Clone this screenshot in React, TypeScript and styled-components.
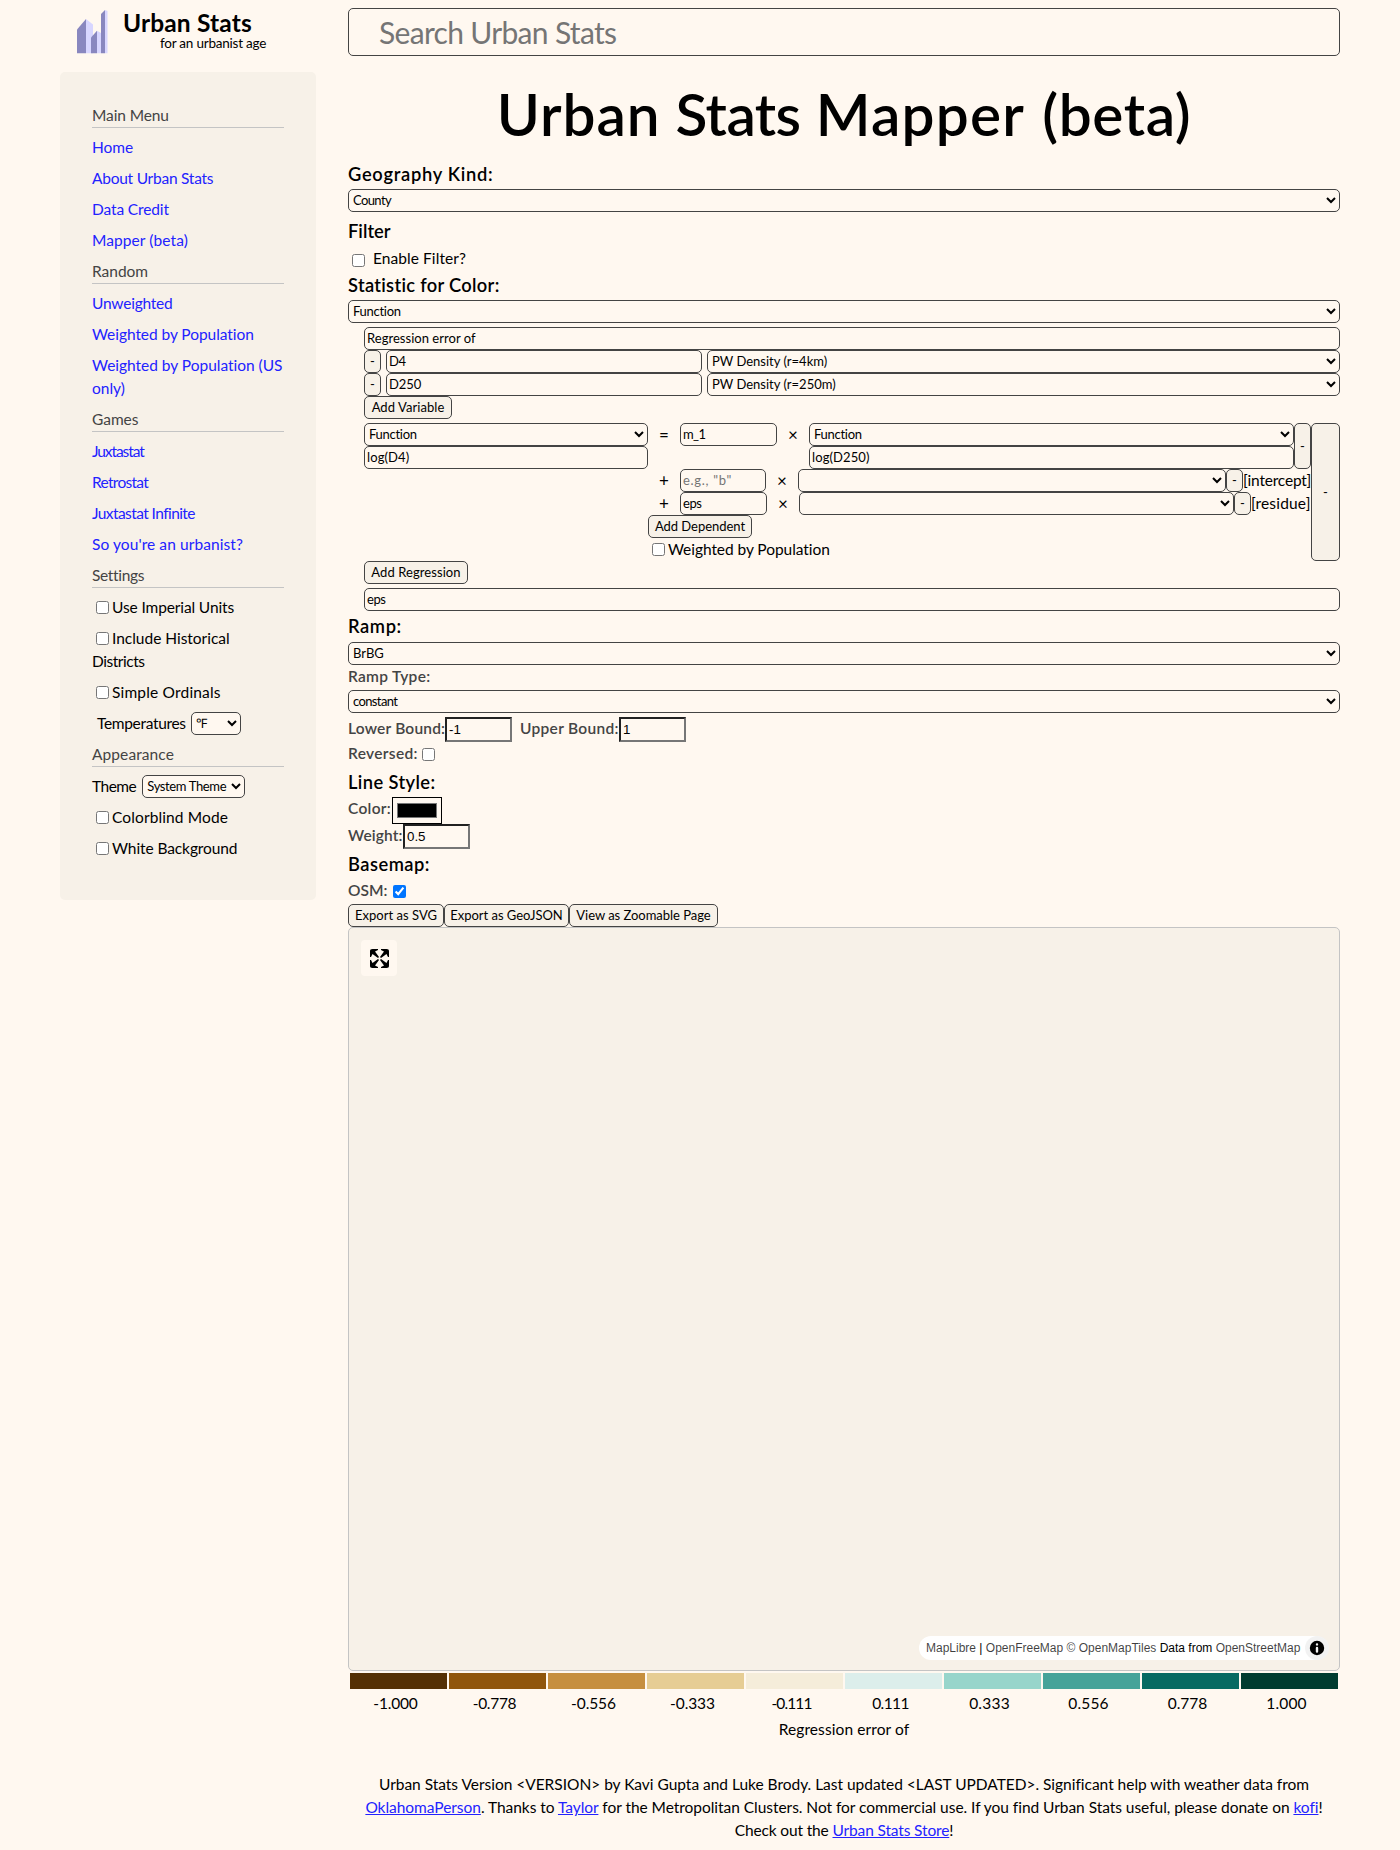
import React from "react";
import styled, { createGlobalStyle, css } from "styled-components";

const colors = {
  background: "#fff8f0",
  panel: "#f7f1e8",
  ink: "#000000",
  muted: "#444444",
  rule: "#c4c4c4",
  border: "#444444",
  link: "#2222ff",
};

const GlobalStyle = createGlobalStyle`
  *, *::before, *::after { box-sizing: border-box; }
  body {
    margin: 0;
    background: ${colors.background};
    color: ${colors.ink};
    font-family: Lato, "Open Sans", sans-serif;
    font-size: 15.5px;
    line-height: 23px;
    overflow-x: hidden;
  }
`;

/* ---------- shared pieces ---------- */

type Track = { $track?: number };

const Text = styled.span<Track & { $gap?: number }>`
  white-space: nowrap;
  letter-spacing: ${p => p.$track ?? 0}px;
  margin-left: ${p => p.$gap ?? 0}px;
`;

const control = css`
  display: block;
  height: 23px;
  margin: 0;
  border: 1px solid ${colors.border};
  border-radius: 5px;
  background: ${colors.background};
  color: ${colors.ink};
  font-family: inherit;
  font-size: 13px;
  min-width: 0;
`;

type Size = { $width?: string; $grow?: boolean };

const Select = styled.select<Track & Size>`
  ${control}
  width: ${p => p.$width ?? "100%"};
  flex: ${p => (p.$grow ? "1 1 0" : "none")};
  padding-bottom: 1px;
  letter-spacing: ${p => p.$track ?? 0}px;
`;

const Field = styled.input<Track & Size>`
  ${control}
  width: ${p => p.$width ?? "100%"};
  flex: none;
  padding: 1px 2px 2px;
  letter-spacing: ${p => p.$track ?? 0}px;
`;

const Button = styled.button<Track & Size & { $tall?: boolean }>`
  ${control}
  width: ${p => p.$width ?? "auto"};
  height: ${p => (p.$tall ? "auto" : "23px")};
  flex: none;
  padding: 1px 0 2px;
  background: ${colors.panel};
  text-align: center;
  white-space: nowrap;
  letter-spacing: ${p => p.$track ?? 0}px;
`;

const Check = styled.input.attrs({ type: "checkbox" })<{ $top?: number; $left?: number }>`
  flex: none;
  width: 13px;
  height: 13px;
  margin: ${p => p.$top ?? 5}px 3px 0 ${p => p.$left ?? 4}px;
`;

const Row = styled.div<{ $height?: number; $top?: number; $gap?: number }>`
  display: flex;
  align-items: flex-start;
  height: ${p => p.$height ?? 23}px;
  margin-top: ${p => p.$top ?? 0}px;
  gap: ${p => p.$gap ?? 0}px;
`;

function Pick({ value, ...rest }: { value: string } & Track & Size) {
  return (
    <Select {...rest}>
      <option>{value}</option>
    </Select>
  );
}

/* ---------- page frame ---------- */

const Page = styled.div`
  display: grid;
  grid-template-columns: 256px 992px;
  column-gap: 32px;
  width: 1280px;
  height: 1850px;
  margin: 0 auto;
  overflow: hidden;
`;

const Side = styled.aside`
  display: flex;
  flex-direction: column;
`;

const Main = styled.main`
  padding-top: 8px;
`;

/* ---------- logo ---------- */

const Brand = styled.div`
  display: flex;
  gap: 15px;
  height: 72px;
  padding: 9px 0 0 17px;
`;

const BrandWords = styled.div`
  display: flex;
  flex-direction: column;
`;

const BrandName = styled.div`
  height: 24px;
  font-size: 24.5px;
  font-weight: 700;
  line-height: 27px;
  letter-spacing: 0.15px;
`;

const BrandTag = styled.div`
  padding-left: 37px;
  font-size: 13.5px;
  line-height: 20px;
  letter-spacing: -0.22px;
`;

function Logo() {
  return (
    <svg width="31" height="45" viewBox="0 0 31 45" aria-hidden="true">
      <path d="M9 10 L16 15.5 V44.3 H9Z" fill="#d8d6ff" />
      <path d="M0 20.5 L9 10 V44.3 H0Z" fill="#8987bf" />
      <path d="M20 21.7 L24 24 V44.3 H20Z" fill="#d8d6ff" />
      <path d="M14 28.5 L20 21.7 V44.3 H14Z" fill="#8987bf" />
      <path d="M28 1 L30.5 2 V44.3 H28Z" fill="#d8d6ff" />
      <path d="M24 5 L28 1 V44.3 H24Z" fill="#8987bf" />
    </svg>
  );
}

/* ---------- side menu ---------- */

const Menu = styled.nav`
  display: flex;
  flex-direction: column;
  gap: 8px;
  height: 828px;
  padding: 32px;
  border-radius: 5px;
  background: ${colors.panel};
`;

const MenuTitle = styled.div<Track>`
  height: 24px;
  border-bottom: 1px solid ${colors.rule};
  color: ${colors.muted};
  letter-spacing: ${p => p.$track ?? 0}px;
`;

const MenuLink = styled.a<Track>`
  color: ${colors.link};
  text-decoration: none;
  letter-spacing: ${p => p.$track ?? 0}px;
`;

const Setting = styled.label<Track>`
  display: flex;
  flex-wrap: wrap;
  letter-spacing: ${p => p.$track ?? 0}px;
`;

const WrappedLine = styled.span`
  flex-basis: 100%;
  letter-spacing: -0.46px;
`;

const menu: { title: string; track: number; links: [string, number][] }[] = [
  {
    title: "Main Menu",
    track: -0.11,
    links: [["Home", -0.04], ["About Urban Stats", -0.24], ["Data Credit", -0.12], ["Mapper (beta)", 0.09]],
  },
  {
    title: "Random",
    track: -0.02,
    links: [["Unweighted", -0.22], ["Weighted by Population", -0.06], ["Weighted by Population (US only)", -0.02]],
  },
  {
    title: "Games",
    track: -0.05,
    links: [["Juxtastat", -1.07], ["Retrostat", -0.7], ["Juxtastat Infinite", -0.58], ["So you're an urbanist?", 0.08]],
  },
];

function SideMenu() {
  return (
    <Menu>
      {menu.map(section => (
        <React.Fragment key={section.title}>
          <MenuTitle $track={section.track}>{section.title}</MenuTitle>
          {section.links.map(([label, track]) => (
            <MenuLink key={label} href="#" $track={track}>{label}</MenuLink>
          ))}
        </React.Fragment>
      ))}
      <MenuTitle $track={-0.33}>Settings</MenuTitle>
      <Setting $track={-0.12}><Check />Use Imperial Units</Setting>
      <Setting $track={-0.02}><Check /><span>Include Historical</span><WrappedLine>Districts</WrappedLine></Setting>
      <Setting $track={0.18}><Check />Simple Ordinals</Setting>
      <Setting>
        <Text $gap={5} $track={-0.32}>Temperatures</Text>
        <Text $gap={5}><Pick value="℉" $width="50px" /></Text>
      </Setting>
      <MenuTitle $track={0.09}>Appearance</MenuTitle>
      <Setting>
        <Text $track={-0.5}>Theme</Text>
        <Text $gap={6}><Pick value="System Theme" $width="103px" $track={-0.37} /></Text>
      </Setting>
      <Setting $track={0.12}><Check />Colorblind Mode</Setting>
      <Setting $track={-0.1}><Check />White Background</Setting>
    </Menu>
  );
}

/* ---------- mapper form ---------- */

const Search = styled.input`
  display: block;
  width: 100%;
  height: 48px;
  padding: 0 30px;
  border: 1px solid ${colors.border};
  border-radius: 5px;
  background: ${colors.background};
  font-family: inherit;
  font-size: 30px;
  letter-spacing: -0.67px;
  &::placeholder { color: #757575; }
`;

const PageTitle = styled.h1`
  height: 104px;
  margin: 0;
  padding-top: 14px;
  font-size: 58.5px;
  font-weight: 600;
  line-height: 86px;
  letter-spacing: 0.63px;
  text-align: center;
`;

const Heading = styled.h3<Track & { $top?: number; $bottom?: number }>`
  height: 27px;
  margin: ${p => p.$top ?? 5}px 0 ${p => p.$bottom ?? 2}px;
  font-size: 18.3px;
  font-weight: 600;
  line-height: 29px;
  letter-spacing: ${p => p.$track ?? 0}px;
`;

const Label = styled(Text)`
  color: ${colors.muted};
  font-weight: 600;
`;

const Indent = styled.div`
  padding-left: 16px;
`;

const Regression = styled.div`
  display: flex;
  height: 138px;
  margin-top: 4px;
`;

const Dependent = styled.div`
  width: 284px;
`;

const Terms = styled.div`
  width: 663px;
`;

const TermSelects = styled.div`
  flex: 1;
`;

const Term = styled.div<{ $height?: number }>`
  display: flex;
  height: ${p => p.$height ?? 23}px;
`;

const Operator = styled.span`
  flex: none;
  width: 32px;
  text-align: center;
  font-size: 17px;
`;

const NumberField = styled.input`
  width: 67px;
  height: 25px;
  margin: 0;
  padding: 1px 2px;
  border: 2px inset #767676;
  background: ${colors.background};
  font-family: "Liberation Sans", Arial, sans-serif;
  font-size: 13.333px;
`;

const ColorField = styled.input`
  width: 50px;
  height: 27px;
  margin: 0;
  border: 1px solid #000;
  background: ${colors.background};
`;

const LabelBox = styled.div<{ $width: number }>`
  flex: none;
  width: ${p => p.$width}px;
`;

function StatisticForm() {
  return (
    <Indent>
      <Row $top={4}><Field defaultValue="Regression error of" $track={0.03} /></Row>
      <Row $gap={5}>
        <Button $width="17px">-</Button>
        <Field defaultValue="D4" $width="316px" $track={-0.5} />
        <Pick value="PW Density (r=4km)" $grow />
      </Row>
      <Row $gap={5}>
        <Button $width="17px">-</Button>
        <Field defaultValue="D250" $width="316px" $track={-0.09} />
        <Pick value="PW Density (r=250m)" $grow />
      </Row>
      <Row><Button $width="88px" $track={0.07}>Add Variable</Button></Row>
      <Regression>
        <Dependent>
          <Pick value="Function" $track={-0.28} />
          <Field defaultValue="log(D4)" $track={0.11} />
        </Dependent>
        <Terms>
          <Term $height={46}>
            <Operator>=</Operator>
            <Field defaultValue="m_1" $width="97px" $track={-0.6} />
            <Operator>×</Operator>
            <TermSelects>
              <Pick value="Function" $track={-0.28} />
              <Field defaultValue="log(D250)" $track={0.11} />
            </TermSelects>
            <Button $width="17px" $tall>-</Button>
          </Term>
          <Term>
            <Operator>+</Operator>
            <Field placeholder={'e.g., "b"'} $width="86px" $track={0.7} />
            <Operator>×</Operator>
            <Pick value="" $grow />
            <Button $width="17px">-</Button>
            <LabelBox $width={68}><Text $track={-0.2}>[intercept]</Text></LabelBox>
          </Term>
          <Term>
            <Operator>+</Operator>
            <Field defaultValue="eps" $width="87px" $track={-0.43} />
            <Operator>×</Operator>
            <Pick value="" $grow />
            <Button $width="17px">-</Button>
            <LabelBox $width={60}><Text $track={0.18}>[residue]</Text></LabelBox>
          </Term>
          <Term><Button $width="104px" $track={-0.04}>Add Dependent</Button></Term>
          <Term><Check /><Text $track={-0.06}>Weighted by Population</Text></Term>
        </Terms>
        <Button $width="29px" $tall>-</Button>
      </Regression>
      <Row><Button $width="104px" $track={0.08}>Add Regression</Button></Row>
      <Row $top={4}><Field defaultValue="eps" $track={-0.43} /></Row>
    </Indent>
  );
}

function MapperForm() {
  return (
    <>
      <Heading $top={0} $track={0.71}>Geography Kind:</Heading>
      <Pick value="County" $track={-0.6} />
      <Heading $track={0.05}>Filter</Heading>
      <Row $height={20}>
        <Check $top={8} />
        <Text as="div" $gap={5} $track={0.07}><Row $top={1}>Enable Filter?</Row></Text>
      </Row>
      <Heading $track={0.32}>Statistic for Color:</Heading>
      <Pick value="Function" $track={-0.28} />
      <StatisticForm />
      <Heading $top={1} $bottom={3} $track={0.6}>Ramp:</Heading>
      <Pick value="BrBG" />
      <Row $height={25}><Label $track={0.3}>Ramp Type:</Label></Row>
      <Pick value="constant" $track={-0.62} />
      <Row $top={4} $height={25}>
        <LabelBox $width={97}><Label $track={0.2}>Lower Bound:</Label></LabelBox>
        <NumberField defaultValue="-1" />
        <LabelBox $width={107}><Label $gap={8} $track={0.3}>Upper Bound:</Label></LabelBox>
        <NumberField defaultValue="1" />
      </Row>
      <Row $height={26}>
        <LabelBox $width={70}><Label $track={0.33}>Reversed:</Label></LabelBox>
        <Check $top={6} />
      </Row>
      <Heading $top={0} $track={0.4}>Line Style:</Heading>
      <Row $height={27}>
        <LabelBox $width={44}><Label $track={0.3}>Color:</Label></LabelBox>
        <ColorField type="color" defaultValue="#000000" />
      </Row>
      <Row $height={25}>
        <LabelBox $width={55}><Label $track={0.14}>Weight:</Label></LabelBox>
        <NumberField defaultValue="0.5" />
      </Row>
      <Heading $top={1} $track={0.5}>Basemap:</Heading>
      <Row $height={25}>
        <LabelBox $width={41}><Label $track={0.05}>OSM:</Label></LabelBox>
        <Check defaultChecked $top={6} />
      </Row>
      <Row>
        <Button $width="96px" $track={0.04}>Export as SVG</Button>
        <Button $width="125px" $track={-0.02}>Export as GeoJSON</Button>
        <Button $width="149px" $track={-0.03}>View as Zoomable Page</Button>
      </Row>
    </>
  );
}

/* ---------- map ---------- */

const MapFrame = styled.section`
  display: flex;
  flex-direction: column;
  justify-content: space-between;
  height: 744px;
  padding: 12px 10px 10px 12px;
  border: 1px solid ${colors.rule};
  border-radius: 5px;
  background: ${colors.panel};
`;

const FullscreenButton = styled.button`
  display: flex;
  align-items: center;
  justify-content: center;
  width: 36px;
  height: 36px;
  padding: 0;
  border: 0;
  border-radius: 4px;
  background: ${colors.background};
`;

const Attribution = styled.div`
  display: flex;
  align-items: center;
  justify-content: space-between;
  align-self: flex-end;
  width: 410px;
  height: 24px;
  padding-left: 7px;
  border-radius: 12px;
  background: #fff;
  font-family: "Liberation Sans", Arial, sans-serif;
  font-size: 12px;
  line-height: 20px;
  white-space: nowrap;
  a { color: rgba(0, 0, 0, 0.75); text-decoration: none; }
`;

const InfoButton = styled.span`
  display: flex;
  width: 24px;
  height: 24px;
  border-radius: 12px;
  background: rgba(0, 0, 0, 0.05);
`;

function MapView() {
  return (
    <MapFrame>
      <FullscreenButton aria-label="Enter fullscreen">
        <svg width="29" height="29" viewBox="0 0 29 29">
          <path d="M24 16v5.5c0 1.75-.75 2.5-2.5 2.5H16v-1l3-1.5-4-5.5 1-1 5.5 4 1.5-3zM6 16l1.5 3 5.5-4 1 1-4 5.5 3 1.5v1H7.5C5.75 24 5 23.25 5 21.5V16zm7-11v1l-3 1.5 4 5.5-1 1-5.5-4L6 13H5V7.5C5 5.75 5.75 5 7.5 5zm11 2.5c0-1.75-.75-2.5-2.5-2.5H16v1l3 1.5-4 5.5 1 1 5.5-4 1.5 3h1z" />
        </svg>
      </FullscreenButton>
      <Attribution>
        <span>
          <a href="#">MapLibre</a> | <a href="#">OpenFreeMap</a> <a href="#">© OpenMapTiles</a> Data from <a href="#">OpenStreetMap</a>
        </span>
        <InfoButton>
          <svg width="24" height="24" viewBox="0 0 20 20" fillRule="evenodd">
            <path d="M4 10a6 6 0 1 0 12 0 6 6 0 1 0-12 0m5-3a1 1 0 1 0 2 0 1 1 0 1 0-2 0m0 3a1 1 0 1 1 2 0v3a1 1 0 1 1-2 0" />
          </svg>
        </InfoButton>
      </Attribution>
    </MapFrame>
  );
}

/* ---------- legend and footer ---------- */

const ramp: [string, string, number][] = [
  ["#543005", "-1.000", -0.18],
  ["#90560c", "-0.778", -0.3],
  ["#c68f3f", "-0.556", -0.1],
  ["#e6cd94", "-0.333", -0.1],
  ["#f5edda", "-0.111", -0.9],
  ["#dceeeb", "0.111", -0.6],
  ["#97d5cb", "0.333", 0.22],
  ["#46a399", "0.556", 0.2],
  ["#076a62", "0.778", 0],
  ["#003c30", "1.000", 0.2],
];

const LegendCell = styled.div`
  width: 99px;
`;

const Swatch = styled.div<{ $color: string }>`
  height: 16px;
  margin: 2px 0 0 2px;
  background: ${p => p.$color};
`;

const LegendValue = styled.div<Track>`
  padding: 3px 4px 0 0;
  text-align: center;
  letter-spacing: ${p => p.$track ?? 0}px;
`;

const Legend = styled.div`
  display: flex;
  height: 47px;
`;

const LegendTitle = styled.div`
  text-align: center;
  letter-spacing: 0.1px;
`;

const Footer = styled.footer`
  margin-top: 32px;
  text-align: center;
  a { color: ${colors.link}; }
`;

const FooterLine = styled.div<Track>`
  white-space: nowrap;
  letter-spacing: ${p => p.$track ?? 0}px;
`;

export default function App() {
  return (
    <>
      <GlobalStyle />
      <Page>
        <Side>
          <Brand>
            <Logo />
            <BrandWords>
              <BrandName>Urban Stats</BrandName>
              <BrandTag>for an urbanist age</BrandTag>
            </BrandWords>
          </Brand>
          <SideMenu />
        </Side>
        <Main>
          <Search placeholder="Search Urban Stats" />
          <PageTitle>
            <Text $track={0.9}>Urban</Text> <Text $track={-0.6}>Stats</Text> <Text $track={1.2}>Mapper</Text> <Text $gap={2} $track={0.63}>(beta)</Text>
          </PageTitle>
          <MapperForm />
          <MapView />
          <Legend>
            {ramp.map(([color, value, track]) => (
              <LegendCell key={value}>
                <Swatch $color={color} />
                <LegendValue $track={track}>{value}</LegendValue>
              </LegendCell>
            ))}
          </Legend>
          <LegendTitle>Regression error of</LegendTitle>
          <Footer>
            <FooterLine $track={-0.02}>
              Urban Stats Version &lt;VERSION&gt; by Kavi Gupta and Luke Brody. Last updated &lt;LAST UPDATED&gt;. Significant help with weather data from
            </FooterLine>
            <FooterLine $track={-0.04}>
              <a href="#">OklahomaPerson</a>. Thanks to <a href="#">Taylor</a> for the Metropolitan Clusters. Not for commercial use. If you find Urban Stats useful, please donate on <a href="#">kofi</a>!
            </FooterLine>
            <FooterLine $track={-0.14}>
              Check out the <a href="#">Urban Stats Store</a>!
            </FooterLine>
          </Footer>
        </Main>
      </Page>
    </>
  );
}
